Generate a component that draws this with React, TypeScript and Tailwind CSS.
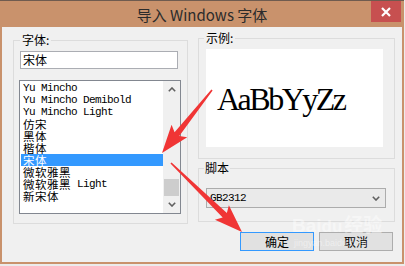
import React from "react";

const CJK = '"Noto Sans CJK SC", "Noto Sans", sans-serif';
const MONO = '"Liberation Mono", "Noto Sans CJK SC", monospace';

function Mixed({ text }: { text: string }) {
  const parts = text.split(/([A-Za-z0-9 ]+)/).filter((p) => p.length > 0);
  return (
    <>
      {parts.map((p, i) =>
        /^[A-Za-z0-9 ]+$/.test(p) ? (
          <span key={i} className="text-[11px] leading-[12px] tracking-[-0.6px] whitespace-pre" style={{ fontFamily: MONO }}>
            {p}
          </span>
        ) : (
          <span key={i} className="text-[11.5px] leading-[12px] tracking-[0.5px]" style={{ fontFamily: CJK }}>
            {p}
          </span>
        )
      )}
    </>
  );
}

function Chevron({ up }: { up?: boolean }) {
  return (
    <svg width="8" height="5" viewBox="0 0 8 5">
      <path
        d={up ? "M0.8 4.2 L4 1 L7.2 4.2" : "M0.8 0.8 L4 4 L7.2 0.8"}
        fill="none"
        stroke="#606060"
        strokeWidth="1.6"
      />
    </svg>
  );
}

function arrowPoints(x1: number, y1: number, x2: number, y2: number) {
  const dx = x2 - x1;
  const dy = y2 - y1;
  const len = Math.hypot(dx, dy);
  const ux = dx / len;
  const uy = dy / len;
  const nx = -uy;
  const ny = ux;
  const headLen = 24;
  const headW = 10;
  const barb = 4;
  const tailW = 0.8;
  const shaftW = 6;
  const bx = x2 - ux * headLen;
  const by = y2 - uy * headLen;
  const wx = bx - ux * barb;
  const wy = by - uy * barb;
  const pts = [
    [x1 + nx * tailW, y1 + ny * tailW],
    [bx + nx * shaftW / 2, by + ny * shaftW / 2],
    [wx + nx * headW, wy + ny * headW],
    [x2, y2],
    [wx - nx * headW, wy - ny * headW],
    [bx - nx * shaftW / 2, by - ny * shaftW / 2],
    [x1 - nx * tailW, y1 - ny * tailW],
  ];
  return pts.map((p) => p.join(",")).join(" ");
}

const items = [
  "Yu Mincho",
  "Yu Mincho Demibold",
  "Yu Mincho Light",
  "仿宋",
  "黑体",
  "楷体",
  "宋体",
  "微软雅黑",
  "微软雅黑 Light",
  "新宋体",
];

export default function App() {
  return (
    <div className="relative w-[405px] h-[266px] bg-[#ECECEC] overflow-hidden">
      <div className="w-[404px] h-[264px] bg-[#C9926C] border-t border-[#6F5B4F] flex flex-col">
        {/* title bar */}
        <div className="relative h-[26px] flex items-center justify-center shrink-0">
          <span className="text-[15px] text-[#2B2B2B] leading-none" style={{ fontFamily: CJK }}>
            导入 Windows 字体
          </span>
          <div className="absolute right-[3px] top-0 w-[30px] h-[21px] bg-[#C75050] flex items-center justify-center">
            <svg width="10" height="10" viewBox="0 0 10 10">
              <path d="M1 1 L9 9 M9 1 L1 9" stroke="#FFFFFF" strokeWidth="2.2" />
            </svg>
          </div>
        </div>
        {/* client */}
        <div className="flex-1 mx-[2px] mb-[2px] bg-[#F0F0F0] flex pl-[11px]" style={{ fontFamily: CJK }}>
          {/* left column */}
          <fieldset className="mt-[5px] w-[174px] h-[192px] border border-[#DCDCDC] px-[6px] shrink-0">
            <legend className="px-[2px] text-[12px] leading-[16px] text-black">字体:</legend>
            <div className="mt-[3px] w-[158px] h-[18px] border border-[#ABADB3] bg-white flex items-center pl-[2px] text-[12px] leading-none text-black">
              宋体
            </div>
            <div className="mt-[11px] -ml-[1px] w-[162px] h-[134px] border border-[#828790] bg-white flex">
              <div className="flex-1 pt-[1px] pl-[1px]">
                {items.map((it) => {
                  const sel = it === "宋体";
                  return (
                    <div
                      key={it}
                      className={
                        "h-[12px] pl-[2px] flex items-center leading-[12px] whitespace-nowrap " +
                        (sel ? "bg-[#3399FF] text-white" : "text-black")
                      }
                    >
                      <Mixed text={it} />
                    </div>
                  );
                })}
              </div>
              <div className="w-[17px] bg-[#F0F0F0] flex flex-col items-center">
                <div className="h-[17px] w-full flex items-center justify-center">
                  <Chevron up />
                </div>
                <div className="flex-1 w-full relative">
                  <div className="absolute left-[1px] right-[1px] top-[81px] h-[17px] bg-[#CDCDCD]" />
                </div>
                <div className="h-[17px] w-full flex items-center justify-center">
                  <Chevron />
                </div>
              </div>
            </div>
          </fieldset>
          {/* right column */}
          <div className="ml-[10px] w-[197px] flex flex-col">
            <fieldset className="mt-[3px] h-[129px] border border-[#DCDCDC] pl-[5px]">
              <legend className="px-[2px] text-[12px] leading-[16px] text-black">示例:</legend>
              <div className="mt-[3px] ml-[2px] w-[177px] h-[98px] bg-white pl-[11px] pt-[34px]">
                <span
                  className="text-[32px] leading-[32px] tracking-[-2.5px] text-black"
                  style={{ fontFamily: '"Liberation Serif", serif' }}
                >
                  AaBbYyZz
                </span>
              </div>
            </fieldset>
            <fieldset className="mt-[1px] h-[62px] border border-[#DCDCDC] pl-[5px]">
              <legend className="px-[1px] text-[12px] leading-[16px] text-black">脚本</legend>
              <div className="mt-[12px] ml-[2px] w-[180px] h-[20px] border border-[#ACACAC] bg-[#EAEAEA] flex items-center justify-between pl-[3px] pr-[5px]">
                <span className="text-[11px] tracking-[-0.6px] leading-none text-black" style={{ fontFamily: MONO }}>
                  GB2312
                </span>
                <Chevron />
              </div>
            </fieldset>
            <div className="mt-[10px] flex justify-end gap-[5px] pr-[2px]">
              <button className="w-[74px] h-[19px] border border-[#3399FF] bg-[#E1E1E1] text-[12px] leading-none text-black flex items-center justify-center">
                确定
              </button>
              <button className="w-[74px] h-[19px] border border-[#ADADAD] bg-[#E1E1E1] text-[12px] leading-none text-black flex items-center justify-center">
                取消
              </button>
            </div>
          </div>
        </div>
      </div>
      {/* watermark */}
      <div className="absolute left-[292px] top-[214px] flex flex-col items-start pointer-events-none opacity-45 whitespace-nowrap">
        <span className="text-[19px] leading-none font-bold text-white whitespace-nowrap" style={{ fontFamily: '"Liberation Sans", sans-serif' }}>
          Bai<span className="text-[17px]">du</span>
          <span className="ml-[2px]" style={{ fontFamily: CJK }}>经验</span>
        </span>
        <span className="text-[9px] leading-none text-white mt-[4px] ml-[2px] whitespace-nowrap" style={{ fontFamily: '"Liberation Sans", sans-serif' }}>
          jingyan.baidu.com
        </span>
      </div>
      {/* annotation arrows */}
      <svg className="absolute left-0 top-0 pointer-events-none" width="405" height="266">
        <polygon points={arrowPoints(212, 90, 162, 153)} fill="#F03535" />
        <polygon points={arrowPoints(171, 163, 242, 232)} fill="#F03535" />
      </svg>
    </div>
  );
}
